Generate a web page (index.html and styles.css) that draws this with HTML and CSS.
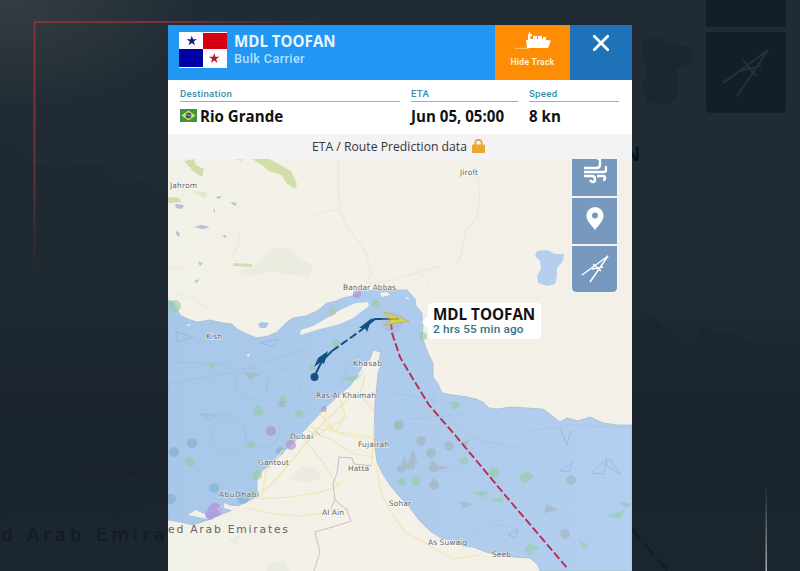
FILE: index.html
```
<!DOCTYPE html>
<html lang="en">
<head>
    <meta charset="UTF-8">
    <meta name="viewport" content="width=device-width, initial-scale=1.0">
    <title>MDL TOOFAN - Vessel Track</title>
    <link rel="stylesheet" href="styles.css">
</head>
<body>
    <svg class="backdrop" viewBox="0 0 800 571" aria-hidden="true">
        <defs>
            <linearGradient id="red-down" gradientUnits="userSpaceOnUse" x1="0" y1="20" x2="0" y2="275">
                <stop offset="0" stop-color="#873238"/>
                <stop offset=".55" stop-color="#70303a"/>
                <stop offset="1" stop-color="#70303a" stop-opacity="0"/>
            </linearGradient>
            <linearGradient id="red-across" gradientUnits="userSpaceOnUse" x1="34" y1="0" x2="330" y2="0">
                <stop offset="0" stop-color="#873238"/>
                <stop offset=".5" stop-color="#73313a"/>
                <stop offset="1" stop-color="#73313a" stop-opacity="0"/>
            </linearGradient>
            <linearGradient id="white-down" gradientUnits="userSpaceOnUse" x1="0" y1="484" x2="0" y2="571">
                <stop offset="0" stop-color="#9aa3aa" stop-opacity="0"/>
                <stop offset="1" stop-color="#a9b0b6"/>
            </linearGradient>
        </defs>
        <path fill="#1a232c" opacity=".3" d="M0 140 12 144 35 166 60 162 105 166 122 183 140 181 168 192V500L120 520 60 512 0 520z"/>
        <path fill="#1a242d" opacity=".55" d="M632 320 655 318 672 334 688 345 704 326 718 334 735 332 752 344 800 347V571H632z"/>
        <path fill="#1b2730" d="M642 42 655 36 670 43 693 48 691 62 676 70 679 92 670 104 647 102 641 87 648 70 642 57z"/>
        <path fill="#121f28" d="M706 0h80v27h-80zM706 32h80v75q0 6-6 6h-68q-6 0-6-6z"/>
        <path class="ghost-compass" d="M723 83 768 50 737 96M743 60 756 76M740 71 761 66"/>
        <text class="ghost-label" x="1" y="541" textLength="164">d Arab Emira</text>
        <text class="ghost-town" x="82" y="476">Abu Dhabi</text>
        <text class="ghost-ship" x="624" y="161">N</text>
        <path stroke="#111d26" stroke-width="2" stroke-dasharray="14 6" d="M632 529 668 571"/>
        <path fill="url(#red-down)" d="M33.500 21h2v254h-2z"/>
        <path fill="url(#red-across)" d="M34 21h296v2H34z"/>
        <path fill="url(#white-down)" d="M765.500 484h1.500v87h-1.500z"/>
    </svg>

    <div class="panel">
        <div class="header">
            <svg class="flag" viewBox="0 0 48 36">
                <path fill="#fff" d="M0 0h48v36H0z"/>
                <path fill="#d80010" d="M24 1h24v16H24z"/>
                <path fill="#0000a5" d="M0 17h24v18H0z"/>
                <path fill="#151a85" d="M12.800 3.500 14 7.200h4l-3.200 2.300 1.200 3.800-3.200-2.400-3.200 2.400 1.200-3.800L7.600 7.200h4z"/>
                <path fill="#b51b32" d="M35.200 21 36.400 24.700h4.200l-3.400 2.400 1.300 4-3.300-2.500-3.300 2.500 1.300-4-3.400-2.400H34z"/>
            </svg>
            <div class="ship">
                <div class="ship-name">MDL TOOFAN</div>
                <div class="ship-type">Bulk Carrier</div>
            </div>
            <div class="track-btn">
                <svg class="ship-icon" viewBox="0 0 36 18">
                    <path fill="#fff" d="M11 8h2V2h1V0h1v2h2v2h-1.500v3H18V4h4v3h1V4h4v3h1V5h3v3l5 .5-3 7.500H12z"/>
                    <path stroke="#fff" stroke-width=".8" opacity=".6" d="M0 16.300h14"/>
                </svg>
                <span>Hide Track</span>
            </div>
            <div class="close-btn">
                <svg viewBox="0 0 16 16"><path d="M2 2l12 12M14 2 2 14"/></svg>
            </div>
        </div>

        <div class="info">
            <div class="field destination">
                <div class="label">Destination</div>
                <div class="value">
                    <svg class="brazil" viewBox="0 0 17 13">
                        <path fill="#3c9443" d="M0 0h17v13H0z"/>
                        <path fill="#e5df54" d="M8.500 1.500 15.500 6.500l-7 5-7-5z"/>
                        <circle cx="8.500" cy="6.500" r="2.900" fill="#34577c"/>
                        <path fill="none" stroke="#b7c9c9" stroke-width=".7" d="M6 5.700q3-.3 5 1.800"/>
                    </svg>
                    <span>Rio Grande</span>
                </div>
            </div>
            <div class="field eta">
                <div class="label">ETA</div>
                <div class="value">Jun 05, 05:00</div>
            </div>
            <div class="field speed">
                <div class="label">Speed</div>
                <div class="value">8 kn</div>
            </div>
        </div>

        <div class="prediction">
            <span>ETA / Route Prediction data</span>
            <svg class="lock" viewBox="0 0 13 14">
                <path fill="none" stroke="#e5a333" stroke-width="1.700" d="M3.300 7V4a3.200 3.200 0 0 1 6.400 0v3"/>
                <rect y="5.500" width="13" height="8.500" rx="1.200" fill="#eaa62f"/>
            </svg>
        </div>

        <div class="map">
            <!-- viewBox starts at the map's own offset in the window -->
            <svg class="chart" viewBox="168 159 464 412">
                <defs>
                    <linearGradient id="land" x1="0" x2="1">
                        <stop offset="0" stop-color="#f2f1e7"/>
                        <stop offset="1" stop-color="#f4f0e9"/>
                    </linearGradient>
                    <linearGradient id="sea" x1="0" x2="1">
                        <stop offset="0" stop-color="#a8c7e9"/>
                        <stop offset="1" stop-color="#b3cfef"/>
                    </linearGradient>
                </defs>
                <path fill="url(#land)" d="M168 159h464v412H168z"/>

                <!-- woods and lakes -->
                <g fill="#d0dfa9">
                    <path d="M252 159h17l13 7 9 5 6 13-2 5-9-6-4-8-13-4-6-5z"/>
                    <path d="M184 161l10-2 2 6 8 4-2 8-9-6z"/>
                    <path d="M168 197l11 1 2 4-13 1zM234 263l18 1 1 3-20-1z"/>
                    <path d="M193 191l12 1 3 4-5 2z" opacity=".5"/>
                    <path d="M235 159h7v3z" opacity=".6"/>
                </g>
                <path fill="#ebecdf" d="M241 271l16-7 15-15 16-2 10 11 14 6-2 13-18-2-20-3-31 5z"/>
                <path fill="#ebecdf" d="M292 477l10-12 16 5 3 8-13 5-17-3zM228 540l12-5-2 11zM268 562l18-1 3 10h-22z"/>
                <g fill="#b4bedd">
                    <path d="M175 204l9 1-2 4-6-1zM215 197l6-1-1 3zM230 202l7 1-2 3zM194 227l7-2 9 2-7 2zM176 231l4 2-1 4-3-3zM222 236l4-1v3zM198 262l5 1-3 3zM194 281l6-2-4 4zM213 210l2-1v4z"/>
                </g>
                <path fill="#b5d0ee" d="M535 256l2-5 10-1 8 4 9 0-1 7-6 7 0 8-2 8-8 2-9-3-1-7 4-7-1-8z"/>

                <!-- roads of southern Iran -->
                <g class="road-faint">
                    <path d="M338 159v28l2 23 8 18 10 13 8 12 5 20-4 11M340 209l-27 6M367 284l26-4 50-15M475 165l5 25-3 28-11 12-5 25-4 8M173 293l22 5 13 11M237 230l3 11-7 15M417 268l12 17M168 267l15 2"/>
                </g>

                <!-- gulf -->
                <path class="sea" d="M168 300L173 302 180 315 188 319 197 322 210 320 223 323 232 324 237 329 247 334 257 338 268 336 277 332 286 323 293 318 306 316 317 311 327 303 336 301 343 298 352 296 360 291 375 290 400 290 407 290 415 299 416 306 422 313 423 326 422 337 428 353 433 363 433 377 438 384 442 393 453 395 467 397 476 399 483 402 489 408 498 409 510 407 527 408 543 409 551 415 560 422 567 418 578 421 590 417 603 423 618 425 632 425V571H540L538 565 530 558 514 557 500 556 486 552 473 547 463 546 453 541 441 538 430 531 419 520 410 508 399 496 390 485 382 473 377 462 374 440 375 400 377 385 378 373 381 365 379 360 381 352 373 350 370 359 362 366 357 376 350 386 337 397 325 408 317 417 310 424 303 432 293 443 283 452 276 460 270 465 263 470 257 478 257 497 248 501 240 505 230 511 220 515 208 520 193 525 180 522 168 520z"/>
                <path class="island" d="M301 330l-1 5 20-6 20-5 13-6 16-12-1-4-12 1-14 6-15 9-14 8z"/>
                <path class="island" d="M380 293l7-1 3 3-8 2zM405 297l4 1-1 2zM186 325l4-1v2zM246 355l4-1-1 3zM188 515l8-5 10 5 2 4-10-2zM224 503l7 3 8 0-7 4-8-2zM216 508l6-2-1 7z"/>
                <path fill="#acc5e9" d="M258 324l4-2 7 1-3 5-6 0z"/>
                <path fill="#b6c5b0" opacity=".65" d="M326 313l5-7 4 2 1 6-6 3z"/>

                <!-- depth lines -->
                <g fill="none" stroke="#94b6dc" stroke-width=".7" opacity=".45">
                    <circle cx="229" cy="436" r="17"/><circle cx="262" cy="430" r="18"/><circle cx="252" cy="384" r="16"/>
                    <circle cx="283" cy="386" r="17"/><circle cx="354" cy="372" r="8"/>
                    <path d="M168 384l61-11 76-23M176 362l56 3M206 413l30 3M474 532l21-8 23 5-14 6M525 431l49-6 58 3M390 392l70 13M400 420l66-6"/>
                    <path d="M434 395v17M440 406l32 33 52 10"/>
                </g>

                <!-- other vessels -->
                <g class="dot-green">
                    <circle cx="175" cy="306" r="6"/><circle cx="258" cy="411" r="5"/><circle cx="283" cy="400" r="4"/>
                    <circle cx="299" cy="414" r="4"/><circle cx="190" cy="462" r="5"/><circle cx="251" cy="445" r="4"/>
                    <circle cx="376" cy="304" r="4"/><circle cx="336" cy="343" r="4"/><circle cx="455" cy="405" r="4"/>
                    <circle cx="402" cy="482" r="4"/><circle cx="416" cy="481" r="5"/><circle cx="464" cy="461" r="4"/>
                    <circle cx="494" cy="473" r="5"/><circle cx="525" cy="478" r="5"/><circle cx="398" cy="426" r="4"/>
                    <circle cx="423" cy="336" r="4"/><circle cx="257" cy="475" r="5"/><circle cx="254" cy="494" r="4"/>
                    <path d="M339 378l22-3-8 7zM473 492l16-1-5 7zM490 499l15-2-4 6zM525 470l9 6-5 5zM605 516l20-6-5 9zM578 540l11 5-5 4zM524 549l8-7-1 15zM205 362l12 2-5 5zM310 361l6 8-7 2zM532 544l8 4-8 4z"/>
                </g>
                <g class="dot-grey">
                    <circle cx="421" cy="441" r="5"/><circle cx="431" cy="453" r="5"/><circle cx="449" cy="446" r="5"/>
                    <circle cx="399" cy="425" r="5"/><circle cx="434" cy="485" r="5"/><circle cx="571" cy="480" r="5"/>
                    <circle cx="565" cy="534" r="5"/><circle cx="411" cy="466" r="4"/><circle cx="401" cy="469" r="4"/>
                    <path d="M243 371l17 3-10 6zM400 470l4-15 5 14zM408 463l5-14 5 14zM428 470l4-10 7 6 12 1-18 5zM459 501l16 3-12 4zM546 504l13 6-15 3zM460 442l10-2-5 7zM620 502l12 2-6 4zM430 488l3-11 6 10zM276 407l6-8 4 8z"/>
                </g>
                <g class="dot-teal">
                    <circle cx="192" cy="443" r="5"/><circle cx="174" cy="452" r="5"/><circle cx="214" cy="488" r="5"/>
                    <circle cx="171" cy="499" r="5"/><circle cx="280" cy="451" r="4"/><circle cx="243" cy="498" r="6"/>
                </g>
                <g class="outline-teal">
                    <path d="M260 343l18-4-4 8zM176 332l17 5-16 5zM201 414l14 2-6 4zM560 471l12-8-3 9zM592 473l15-15-3 16zM610 459l10 15-16-10zM508 535l10-5-3 8zM560 428l7 17 4-15"/>
                </g>
                <g class="dot-purple">
                    <circle cx="271" cy="431" r="5"/><circle cx="215" cy="510" r="7"/><circle cx="291" cy="445" r="5"/>
                    <circle cx="210" cy="515" r="5"/><circle cx="357" cy="294" r="4"/><circle cx="324" cy="409" r="3"/>
                </g>

                <!-- Emirates and Oman roads -->
                <g class="road">
                    <path d="M254 498l21-17 24-29 24-29 30-28M257 499l34-2 27-4 17-6 11-8M247 508l28 6 27 2 32-5M262 497l4-26 17-21M304 438l18 23 17 26M306 430l26 10 22 14 19 3M327 409l-4 15 20 11 31 4M365 375l-5 20 14 16M376 464l5 29 10 19 14 20 24 13 23 14 28-4M374 425l-2 38-12 8M310 427l28 5 37 5M340 399l5 15-9 18M346 417l-40 25M320 414l13 15"/>
                </g>
                <path class="border" d="M339 458l-2 15-4 11 2 15-4 10M346 508l5 13-12 4-24 7 5 20-6 19M338 457l14 1 2 6 18 2M335 500l12 10M314 430l6 5M345 362l15 0"/>

                <!-- map labels -->
                <g class="place">
                    <text x="170" y="188" textLength="27">Jahrom</text>
                    <text x="460" y="175" textLength="18">Jiroft</text>
                    <text x="343" y="290" textLength="53">Bandar Abbas</text>
                    <text x="206" y="339" textLength="16">Kish</text>
                    <text x="353" y="366" textLength="29">Khasab</text>
                    <text x="316" y="398" textLength="60">Ras Al Khaimah</text>
                    <text x="290" y="439" textLength="23">Dubai</text>
                    <text x="358" y="447" textLength="31">Fujairah</text>
                    <text x="258" y="465" textLength="31">Gantout</text>
                    <text x="348" y="471" textLength="21">Hatta</text>
                    <text x="219" y="497" textLength="40">AbuDhabi</text>
                    <text x="389" y="506" textLength="22">Sohar</text>
                    <text x="322" y="515" textLength="22">Al Ain</text>
                    <text x="428" y="545" textLength="39">As Suwaiq</text>
                    <text x="492" y="557" textLength="19">Seeb</text>
                </g>
                <text class="country" x="168" y="533" textLength="120">ed Arab Emirates</text>

                <!-- vessel track -->
                <path class="route" d="M391 322l1 11 8 24 13 22 16 26 26 30 55 66 58 68"/>
                <path class="track-line" d="M314 377l8-16 10-10M371 321l4-2h22"/>
                <path class="track-line dashed" d="M332 351l28-20 15-12"/>
                <g fill="#13517e">
                    <circle cx="314.500" cy="377" r="4"/>
                    <path d="M314 367l4-9 10-7-4 13-3-2zM359 328l13-10-5 14-2-4z"/>
                </g>
                <circle cx="393" cy="322" r="11" fill="#b9a4ca" opacity=".3"/>
                <path fill="#d5d64b" stroke="#b5b64b" stroke-width=".8" d="M384 312l25 9-24 4 6-5z"/>
                <path fill="none" stroke="#9c8d28" stroke-width="1.200" d="M387 319h12"/>
            </svg>

            <div class="tooltip">
                <div class="tooltip-name">MDL TOOFAN</div>
                <div class="tooltip-time">2 hrs 55 min ago</div>
            </div>

            <div class="tools">
                <div class="tool wind">
                    <svg viewBox="0 0 24 26"><path d="M1 9h10M1 13h20q2 0 2-2V7M1 17h8q3 0 3 3t-2 3-3-2M9 9h4q4 0 4-3V1q0-2-3-1M14 17h6q2 0 2 2t-2 2"/></svg>
                </div>
                <div class="tool pin">
                    <svg viewBox="0 0 18 24"><path fill="#fff" fill-rule="evenodd" d="M9 0a8.600 8.600 0 0 1 8.600 8.600C17.600 14 12 19 9 23 6 19 .4 14 .4 8.600A8.600 8.600 0 0 1 9 0zm0 5.600a3 3 0 1 0 0 6 3 3 0 0 0 0-6z"/></svg>
                </div>
                <div class="tool compass">
                    <svg viewBox="0 0 28 28"><path d="M1 20 27 1 9 27M12 9l8 7M11 14l11-2"/></svg>
                </div>
            </div>
        </div>
    </div>
</body>
</html>
```
FILE: styles.css
```
* {
    box-sizing: border-box;
}

body {
    margin: 0;
    height: 571px;
    overflow: hidden;
    padding-top: 25px;
    font-family: "Open Sans", "Noto Sans", sans-serif;
    background: radial-gradient(ellipse 190px 110px at 10px 0, rgba(82, 86, 82, 0.4), transparent),
        linear-gradient(#202c35 0, #202b34 50%, #1b242d 75%, #1c2731 100%);
}

.backdrop {
    position: absolute;
    top: 0;
    left: 0;
    width: 800px;
    height: 571px;
}

.ghost-compass {
    fill: none;
    stroke: #26323a;
    stroke-width: 2;
}

.ghost-label {
    font: 18px "DejaVu Sans", sans-serif;
    fill: #121c25;
    stroke: #121c25;
    stroke-width: 0.4;
}

.ghost-town {
    font: 13px "DejaVu Sans", sans-serif;
    fill: #17212a;
}

.ghost-ship {
    font: bold 20px "Open Sans", sans-serif;
    fill: #08141c;
}

.panel {
    position: relative;
    width: 464px;
    height: 546px;
    margin-left: 168px;
    display: flex;
    flex-direction: column;
    background: #fff;
}

.header {
    display: flex;
    height: 55px;
    background: #2196f3;
    color: #fff;
}

.flag {
    width: 48px;
    height: 36px;
    margin: 7px 7px 0 11px;
}

.ship {
    flex: 1;
    padding-top: 6px;
}

.ship-name {
    font-size: 15.1px;
    line-height: 20px;
    font-weight: bold;
    color: #e9f6ff;
}

.ship-type {
    font: 500 12.7px/16px Roboto, sans-serif;
    letter-spacing: 0.35px;
    color: #b3e0ff;
}

.track-btn {
    width: 75px;
    display: flex;
    flex-direction: column;
    align-items: center;
    padding-top: 7px;
    background: #fe8c05;
    font: bold 8.6px/10px Roboto, sans-serif;
    letter-spacing: 0.25px;
    color: #fff0ce;
}

.ship-icon {
    width: 36px;
    height: 18px;
    margin-bottom: 7px;
}

.close-btn {
    width: 62px;
    padding-top: 9px;
    text-align: center;
    background: #1d72b8;
}

.close-btn svg {
    width: 18px;
    height: 18px;
}

.close-btn path {
    stroke: #fff;
    stroke-width: 2.5;
    stroke-linecap: round;
}

.info {
    display: flex;
    gap: 11px;
    height: 54px;
    padding: 8px 13px 0 12px;
}

.destination {
    width: 220px;
}

.eta {
    width: 107px;
}

.speed {
    width: 90px;
}

.label {
    height: 14px;
    border-bottom: 1px solid #84b6c8;
    font: 500 9.6px/12px Roboto, sans-serif;
    letter-spacing: 0.3px;
    color: #368fac;
}

.value {
    display: flex;
    align-items: center;
    gap: 3px;
    height: 27px;
    font-size: 15.1px;
    font-weight: bold;
    color: #111;
    white-space: nowrap;
}

.brazil {
    width: 17px;
    height: 13px;
}

.prediction {
    display: flex;
    justify-content: center;
    align-items: center;
    gap: 5px;
    height: 25px;
    padding-right: 3px;
    background: #f3f3f3;
    font-size: 12.2px;
    color: #343439;
}

.lock {
    width: 13px;
    height: 14px;
    margin-bottom: 2px;
}

.map {
    position: relative;
    height: 412px;
    overflow: hidden;
}

.chart {
    display: block;
    width: 464px;
    height: 412px;
}

.sea {
    fill: url(#sea);
    stroke: #a9bdd0;
    stroke-width: 0.8;
}

.island {
    fill: #f3f2e8;
}

.road-faint,
.road {
    fill: none;
    stroke: #f1e5b4;
    stroke-width: 1.2;
}

.road-faint {
    stroke: #ece8d4;
}

.border {
    fill: none;
    stroke: #c9bec5;
    stroke-width: 1;
}

.dot-green {
    fill: #91cea0;
    opacity: 0.6;
}

.dot-grey {
    fill: #a5aeb3;
    opacity: 0.5;
}

.dot-teal {
    fill: #7fadcd;
    opacity: 0.6;
}

.outline-teal {
    fill: none;
    stroke: #86abd0;
    stroke-width: 0.9;
    opacity: 0.6;
}

.dot-purple {
    fill: #b18ed5;
    opacity: 0.65;
}

.place {
    font: 7.5px "DejaVu Sans", sans-serif;
    fill: #66666b;
    stroke: rgba(255, 255, 255, 0.55);
    stroke-width: 1.5;
    paint-order: stroke;
}

.country {
    font: 10.8px "DejaVu Sans", sans-serif;
    fill: #66656b;
}

.route {
    fill: none;
    stroke: #b82b52;
    stroke-width: 1.9;
    stroke-dasharray: 8 3;
}

.track-line {
    fill: none;
    stroke: #13517e;
    stroke-width: 2;
}

.dashed {
    stroke-dasharray: 8 3;
}

.tooltip {
    position: absolute;
    top: 144px;
    left: 260px;
    width: 113px;
    height: 36px;
    padding: 2px 5px;
    border-radius: 4px;
    background: #fff;
    white-space: nowrap;
}

.tooltip::before {
    content: "";
    position: absolute;
    left: -6px;
    top: 12px;
    border: 7px solid transparent;
    border-left: 0;
    border-right-color: #fff;
}

.tooltip-name {
    font-size: 15.2px;
    line-height: 18px;
    font-weight: bold;
    color: #111;
}

.tooltip-time {
    font: 500 11.8px/12px Roboto, sans-serif;
    letter-spacing: 0.15px;
    color: #31738b;
}

.tools {
    position: absolute;
    top: -9px;
    left: 404px;
    display: flex;
    flex-direction: column;
    gap: 2px;
}

.tool {
    width: 45px;
    height: 46px;
    display: flex;
    justify-content: center;
    align-items: center;
    background: #7699bd;
    outline: 1px solid #f3f5f7;
}

.compass {
    border-radius: 0 0 4px 4px;
}

.tool svg {
    width: 24px;
    height: 26px;
}

.wind svg {
    margin-bottom: 2px;
}

.pin svg {
    width: 18px;
    height: 24px;
    margin-bottom: 4px;
}

.compass svg {
    width: 28px;
    height: 28px;
    margin-bottom: 1px;
}

.wind path,
.compass path {
    fill: none;
    stroke: #fff;
    stroke-width: 2.4;
}

.compass path {
    stroke-width: 1.4;
}
```
